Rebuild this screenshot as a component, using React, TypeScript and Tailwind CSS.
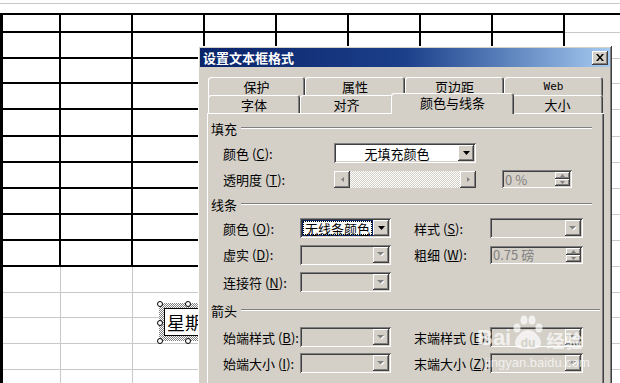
import React from 'react';

const raised =
    'shadow-[inset_-1px_-1px_#404040,inset_1px_1px_#ffffff,inset_-2px_-2px_#808080,inset_2px_2px_#d4d0c8]';
const sunken =
    'shadow-[inset_1px_1px_#808080,inset_-1px_-1px_#ffffff,inset_2px_2px_#404040,inset_-2px_-2px_#d4d0c8]';

const blackRows = [18, 26, 25, 26, 27, 26, 26, 26, 26, 26];
const grayRows = [26, 25, 26, 26, 26];
const cols = [58, 72, 72, 72, 72, 72, 72, 72, 72];

function Sheet() {
    return (
        <div className="flex flex-col">
            <div className="h-[3px]" />
            <div className="h-px bg-[#c8c8c8]" />
            <div className="h-[9px]" />
            <div className="border-l-[3px] border-t-2 border-black flex flex-col">
                {blackRows.map((h, r) => (
                    <div key={r} className="flex" style={{ height: h }}>
                        {cols.map((w, c) =>
                            c < 8 ? (
                                <div
                                    key={c}
                                    className="shrink-0 border-r-2 border-b-2 border-black"
                                    style={{ width: w }}
                                />
                            ) : (
                                <div
                                    key={c}
                                    className="shrink-0 border-r border-b border-[#c8c8c8]"
                                    style={{ width: w }}
                                />
                            )
                        )}
                    </div>
                ))}
                {grayRows.map((h, r) => (
                    <div key={r} className="flex" style={{ height: h }}>
                        {cols.map((w, c) => (
                            <div
                                key={c}
                                className="shrink-0 border-r border-b border-[#c8c8c8]"
                                style={{ width: w }}
                            />
                        ))}
                    </div>
                ))}
            </div>
        </div>
    );
}

function Arrow({ disabled }: { disabled?: boolean }) {
    if (disabled) {
        return (
            <svg width="8" height="5" viewBox="0 0 8 5">
                <path d="M1 1h7L4.5 4.5z" fill="#ffffff" />
                <path d="M0 0h7L3.5 3.5z" fill="#808080" />
            </svg>
        );
    }
    return (
        <svg width="7" height="4" viewBox="0 0 7 4">
            <path d="M0 0h7L3.5 4z" fill="#000000" />
        </svg>
    );
}

function DropBtn({ disabled }: { disabled?: boolean }) {
    return (
        <div className={`w-[16px] h-full shrink-0 flex items-center justify-center bg-[#d4d0c8] ${raised}`}>
            <Arrow disabled={disabled} />
        </div>
    );
}

function Combo({ w, text, disabled, focused }: { w: number; text?: string; disabled?: boolean; focused?: boolean }) {
    return (
        <div
            className={`h-[20px] shrink-0 flex p-[2px] ${sunken} ${disabled ? 'bg-[#d4d0c8]' : 'bg-white'}`}
            style={{ width: w }}
        >
            <div className="flex-1 flex items-center justify-center min-w-0">
                {focused ? (
                    <div className="w-full h-full bg-[#0a246a] p-[1px]">
                        <div className="w-full h-full bg-white border border-dotted border-black flex items-center justify-center text-black leading-none">
                            {text}
                        </div>
                    </div>
                ) : (
                    <span className="text-black leading-none">{text}</span>
                )}
            </div>
            <DropBtn disabled={disabled} />
        </div>
    );
}

function Spin({ w, text }: { w: number; text: string }) {
    return (
        <div className={`h-[18px] shrink-0 flex p-[2px] bg-[#d4d0c8] ${sunken}`} style={{ width: w }}>
            <div className="flex-1 flex items-center pl-[1px] text-[#808080] leading-none">{text}</div>
            <div className="w-[15px] h-full flex flex-col">
                <div className={`flex-1 flex items-center justify-center bg-[#d4d0c8] ${raised}`}>
                    <svg width="5" height="3" viewBox="0 0 5 3">
                        <path d="M0 3h5L2.5 0z" fill="#808080" />
                    </svg>
                </div>
                <div className={`flex-1 flex items-center justify-center bg-[#d4d0c8] ${raised}`}>
                    <svg width="5" height="3" viewBox="0 0 5 3">
                        <path d="M0 0h5L2.5 3z" fill="#808080" />
                    </svg>
                </div>
            </div>
        </div>
    );
}

function Scroll() {
    return (
        <div className="w-[142px] h-[17px] shrink-0 flex">
            <div className={`w-[16px] h-full flex items-center justify-center bg-[#d4d0c8] ${raised}`}>
                <svg width="3" height="5" viewBox="0 0 3 5">
                    <path d="M3 0v5L0 2.5z" fill="#808080" />
                </svg>
            </div>
            <div className="flex-1 bg-[repeating-conic-gradient(#ffffff_0_25%,#d4d0c8_0_50%)] bg-[length:2px_2px]" />
            <div className={`w-[16px] h-full flex items-center justify-center bg-[#d4d0c8] ${raised}`}>
                <svg width="3" height="5" viewBox="0 0 3 5">
                    <path d="M0 0v5L3 2.5z" fill="#808080" />
                </svg>
            </div>
        </div>
    );
}

function Label({ text, k, w }: { text: string; k: string; w: number }) {
    return (
        <div className="shrink-0 whitespace-nowrap" style={{ width: w }}>
            {text} (<span className="underline">{k}</span>):
        </div>
    );
}

function Group({ title, h, mr }: { title: string; h: number; mr: number }) {
    return (
        <div className="flex items-center pl-[2px]" style={{ height: h, marginRight: mr }}>
            <span className="leading-none">{title}</span>
            <div className="flex-1 ml-[4px] border-t border-t-[#808080] border-b border-b-white" />
        </div>
    );
}

const backTabs = [
    { t: '保护', w: 97 },
    { t: '属性', w: 100 },
    { t: '页边距', w: 99 },
    { t: 'Web', w: 99 },
];

const frontTabs = [
    { t: '字体', w: 92 },
    { t: '对齐', w: 93 },
    { t: '颜色与线条', w: 119 },
    { t: '大小', w: 91 },
];

const tabShadow = 'shadow-[inset_1px_1px_#ffffff,inset_-1px_0_#404040,inset_-2px_0_#808080]';

function Dialog() {
    return (
        <div
            className={`absolute left-[198px] top-[46px] w-[414px] h-[360px] bg-[#d4d0c8] p-[2px] text-[13px] text-black ${raised}`}
            style={{ fontFamily: '"Noto Sans CJK SC", "Noto Sans", sans-serif' }}
        >
            {/* title bar */}
            <div className="h-[19px] flex items-center bg-gradient-to-r from-[#0a246a] via-[#1c3f8a] to-[#a6caf0] pl-[3px] pr-[2px]">
                <span className="flex-1 text-white font-bold text-[13px] leading-none">设置文本框格式</span>
                <div className={`w-[16px] h-[14px] flex items-center justify-center bg-[#d4d0c8] ${raised}`}>
                    <svg width="8" height="7" viewBox="0 0 8 7">
                        <path d="M0 0h2l2 2.5L6 0h2L5 3.5 8 7H6L4 4.5 2 7H0l3-3.5z" fill="#000000" />
                    </svg>
                </div>
            </div>

            {/* tabs */}
            <div className="ml-[7px] w-[397px] mt-[10px]">
                <div className="flex h-[18px] pl-[1px]">
                    {backTabs.map((tab) => (
                        <div
                            key={tab.t}
                            className={`shrink-0 h-[20px] rounded-t-[3px] bg-[#d4d0c8] flex justify-center pt-[3px] leading-none ${tabShadow}`}
                            style={{ width: tab.w }}
                        >
                            {tab.t === 'Web' ? (
                                <span className="text-[11px] pt-[1px]" style={{ fontFamily: '"DejaVu Sans Mono", monospace' }}>
                                    Web
                                </span>
                            ) : (
                                tab.t
                            )}
                        </div>
                    ))}
                </div>
                <div className="flex h-[18px] pl-[1px] relative">
                    {frontTabs.map((tab, i) =>
                        i === 2 ? (
                            <div
                                key={tab.t}
                                className="shrink-0 w-[123px] -mx-[2px] h-[21px] -mt-[2px] relative z-10 rounded-t-[3px] bg-[#d4d0c8] flex justify-center pt-[3px] leading-none shadow-[inset_1px_1px_#ffffff,inset_-1px_0_#404040,inset_-2px_0_#808080]"
                            >
                                {tab.t}
                            </div>
                        ) : (
                            <div
                                key={tab.t}
                                className={`shrink-0 h-[18px] rounded-t-[3px] bg-[#d4d0c8] flex justify-center pt-[3px] leading-none ${tabShadow}`}
                                style={{ width: tab.w }}
                            >
                                {tab.t}
                            </div>
                        )
                    )}
                </div>

                {/* panel */}
                <div className="h-[300px] p-[2px] shadow-[inset_1px_1px_#ffffff,inset_-1px_-1px_#404040,inset_-2px_-2px_#808080] leading-none">
                    <Group title="填充" h={26} mr={10} />
                    <div className="h-[24px] flex items-center pl-[14px]">
                        <Label text="颜色" k="C" w={111} />
                        <Combo w={142} text="无填充颜色" />
                    </div>
                    <div className="h-[28px] flex items-center pl-[14px]">
                        <Label text="透明度" k="T" w={111} />
                        <Scroll />
                        <div className="w-[26px]" />
                        <Spin w={70} text="0 %" />
                    </div>
                    <Group title="线条" h={22} mr={10} />
                    <div className="h-[26px] flex items-center pl-[14px]">
                        <Label text="颜色" k="O" w={77} />
                        <Combo w={91} text="无线条颜色" focused />
                        <div className="w-[23px]" />
                        <Label text="样式" k="S" w={76} />
                        <Combo w={93} disabled />
                    </div>
                    <div className="h-[27px] flex items-center pl-[14px]">
                        <Label text="虚实" k="D" w={77} />
                        <Combo w={91} disabled />
                        <div className="w-[23px]" />
                        <Label text="粗细" k="W" w={76} />
                        <Spin w={93} text="0.75 磅" />
                    </div>
                    <div className="h-[28px] flex items-center pl-[14px]">
                        <Label text="连接符" k="N" w={77} />
                        <Combo w={91} disabled />
                    </div>
                    <Group title="箭头" h={28} mr={2} />
                    <div className="h-[26px] flex items-center pl-[14px]">
                        <Label text="始端样式" k="B" w={77} />
                        <Combo w={91} disabled />
                        <div className="w-[23px]" />
                        <Label text="末端样式" k="E" w={76} />
                        <Combo w={93} disabled />
                    </div>
                    <div className="h-[26px] flex items-center pl-[14px]">
                        <Label text="始端大小" k="I" w={77} />
                        <Combo w={91} disabled />
                        <div className="w-[23px]" />
                        <Label text="末端大小" k="Z" w={76} />
                        <Combo w={93} disabled />
                    </div>
                </div>
            </div>
        </div>
    );
}

function TextBox() {
    const handles = [
        [0, 0],
        [28, 0],
        [0, 19],
        [0, 37],
        [28, 37],
    ];
    return (
        <div className="absolute left-[157px] top-[301px] w-[50px] h-[42px]">
            <div className="absolute inset-[2px] bg-[repeating-conic-gradient(#808080_0_25%,#ffffff_0_50%)] bg-[length:2px_2px]" />
            <div
                className="absolute left-[7px] top-[7px] right-0 bottom-[7px] bg-white border border-black flex items-center pl-[2px] text-[18px] leading-none"
                style={{ fontFamily: '"Noto Sans CJK SC", sans-serif' }}
            >
                星期
            </div>
            {handles.map(([x, y], i) => (
                <div
                    key={i}
                    className="absolute w-[6px] h-[6px] rounded-full bg-white border border-black"
                    style={{ left: x, top: y }}
                />
            ))}
        </div>
    );
}

function Watermark() {
    return (
        <div className="absolute left-[477px] top-[314px] w-[115px] h-[58px] text-white/70 pointer-events-none">
            <div className="flex items-end h-[36px]">
                <span className="text-[22px] font-bold leading-none mb-[1px]" style={{ fontFamily: '"Liberation Sans", Arial, sans-serif' }}>
                    Bai
                </span>
                <svg width="33" height="36" viewBox="0 0 33 36">
                    <ellipse cx="6" cy="14" rx="3.5" ry="4.5" fill="currentColor" />
                    <ellipse cx="13" cy="6" rx="3.5" ry="4.5" fill="currentColor" />
                    <ellipse cx="21" cy="6" rx="3.5" ry="4.5" fill="currentColor" />
                    <ellipse cx="28" cy="14" rx="3.5" ry="4.5" fill="currentColor" />
                    <path d="M17 16c-7 0-13 8-13 13 0 5 5 6 13 6s13-1 13-6c0-5-6-13-13-13z" fill="currentColor" />
                    <text x="17" y="33" fontSize="12" fontWeight="bold" textAnchor="middle" fill="#d4d0c8" fontFamily="Liberation Sans, Arial, sans-serif">
                        du
                    </text>
                </svg>
                <span className="text-[18px] font-bold leading-none ml-[2px] mb-[1px]" style={{ fontFamily: '"Noto Sans CJK SC", sans-serif' }}>
                    经验
                </span>
            </div>
            <div className="text-[13px] leading-none mt-[6px] pl-[8px] whitespace-nowrap" style={{ fontFamily: '"Liberation Sans", Arial, sans-serif' }}>
                jingyan.baidu.com
            </div>
        </div>
    );
}

export default function App() {
    return (
        <div className="w-[620px] h-[383px] relative overflow-hidden bg-white">
            <Sheet />
            <TextBox />
            <Dialog />
            <Watermark />
        </div>
    );
}
